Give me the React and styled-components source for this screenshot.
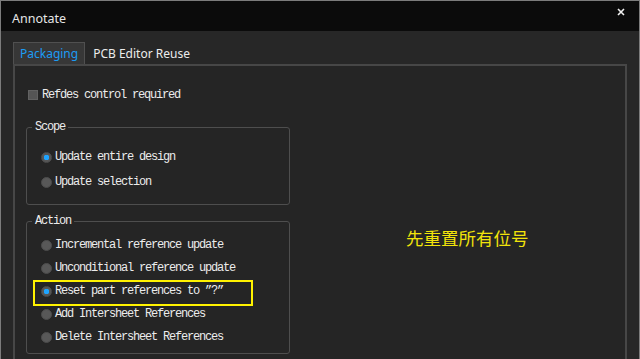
import React from 'react'
import styled, { createGlobalStyle } from 'styled-components'

const GlobalStyle = createGlobalStyle`
  html, body {
    margin: 0;
    padding: 0;
    background: #262626;
  }
  * { box-sizing: border-box; }
`

const scopeItems = [
  { label: 'Update entire design', checked: true },
  { label: 'Update selection' },
]

const actionItems = [
  { label: 'Incremental reference update' },
  { label: 'Unconditional reference update' },
  { label: 'Reset part references to \u201d?\u201d', checked: true, marked: true },
  { label: 'Add Intersheet References' },
  { label: 'Delete Intersheet References' },
]

function App() {
  return (
    <>
      <GlobalStyle />
      <Window>
        <TitleBar>
          <Title>Annotate</Title>
          <CloseButton>
            <svg width="8" height="8" viewBox="0 0 8 8">
              <path d="M1 1 L7 7 M7 1 L1 7" stroke="#f2f2f2" strokeWidth="1.6" />
            </svg>
          </CloseButton>
        </TitleBar>
        <Body>
          <Tabs>
            <Tab active>Packaging</Tab>
            <Tab>PCB Editor Reuse</Tab>
          </Tabs>
          <Panel>
            <CheckRow>
              <CheckBox />
              <Label>Refdes control required</Label>
            </CheckRow>

            <ScopeGroup top={14} bottom={12} gap={5}>
              <Legend>Scope</Legend>
              {scopeItems.map((item) => (
                <RadioRow key={item.label}>
                  <Radio checked={item.checked} />
                  <Label>{item.label}</Label>
                </RadioRow>
              ))}
            </ScopeGroup>

            <ActionLine>
              <Group top={8} bottom={6} gap={3}>
                <Legend>Action</Legend>
                {actionItems.map((item) => (
                  <RadioRow key={item.label} marked={item.marked}>
                    <Radio checked={item.checked} />
                    <Label>{item.label}</Label>
                  </RadioRow>
                ))}
              </Group>
              <Note>先重置所有位号</Note>
            </ActionLine>
          </Panel>
        </Body>
      </Window>
    </>
  )
}

export default App

const Window = styled.div`
  width: 640px;
  height: 359px;
  border: 1px solid #7c7c7c;
  border-bottom: none;
  background: #272727;
  display: flex;
  flex-direction: column;
  overflow: hidden;
`

const TitleBar = styled.div`
  height: 30px;
  flex: none;
  background: #0b0b0b;
  display: flex;
  justify-content: space-between;
  align-items: flex-start;
  padding: 0 14px 0 11px;
`

const Title = styled.div`
  font-family: "Noto Sans", "Liberation Sans", sans-serif;
  font-size: 12.5px;
  color: #e6e6e6;
  line-height: 30px;
  padding-top: 3px;
`

const CloseButton = styled.div`
  display: flex;
  padding-top: 7px;
`

const Body = styled.div`
  flex: 1;
  display: flex;
  flex-direction: column;
  padding: 11px 12px 0 12px;
`

const Tabs = styled.div`
  display: flex;
  height: 22px;
  align-items: stretch;
`

const Tab = styled.div`
  font-family: "Noto Sans", "Liberation Sans", sans-serif;
  font-size: 12px;
  display: flex;
  align-items: center;
  min-width: 72px;
  color: ${(p) => (p.active ? '#1c9cf4' : '#ececec')};
  background: ${(p) => (p.active ? '#373737' : 'transparent')};
  border: 1px solid ${(p) => (p.active ? '#505050' : 'transparent')};
  border-bottom: none;
  padding: 0 6px 0 ${(p) => (p.active ? '6px' : '7px')};
`

const Panel = styled.div`
  flex: 1;
  min-height: 320px;
  background: #252525;
  border: 2px solid #474747;
  border-bottom: none;
  padding: 23px 12px 0 12px;
  display: flex;
  flex-direction: column;
  align-items: flex-start;
`

const Label = styled.span`
  font-family: "Liberation Mono", "DejaVu Sans Mono", monospace;
  font-size: 12px;
  letter-spacing: -1.2px;
  color: #ececec;
  line-height: 12px;
  white-space: pre;
`

const CheckRow = styled.div`
  display: flex;
  align-items: center;
  gap: 4px;
  height: 12px;
  margin-left: 1px;
`

const CheckBox = styled.span`
  width: 10px;
  height: 10px;
  background: #555555;
  border: 1px solid #626262;
`

const Group = styled.fieldset`
  width: 264px;
  margin: 0 0 0 -1px;
  border: 1px solid #4e4e4e;
  border-radius: 3px;
  padding: ${(p) => `${p.top}px 12px ${p.bottom}px 14px`};
  display: flex;
  flex-direction: column;
  gap: ${(p) => p.gap}px;
`

const ScopeGroup = styled(Group)`
  margin-top: 20px;
`

const Legend = styled.legend`
  font-family: "Liberation Mono", "DejaVu Sans Mono", monospace;
  font-size: 12px;
  letter-spacing: -1.2px;
  line-height: 12px;
  color: #ececec;
  padding: 0 3px;
  margin-left: -9px;
`

const RadioRow = styled.div`
  position: relative;
  display: flex;
  align-items: center;
  gap: 3px;
  height: 20px;
  ${(p) =>
    p.marked &&
    `
    &::after {
      content: '';
      position: absolute;
      left: -8px;
      top: -1px;
      width: 216px;
      height: 22px;
      border: 2px solid #fff200;
    }
  `}
`

const Radio = styled.span`
  width: 11px;
  height: 11px;
  border-radius: 50%;
  background: ${(p) =>
    p.checked
      ? 'radial-gradient(circle, #1ea4ff 0 2.6px, #565656 3px)'
      : '#585858'};
  border: 1px solid #4c4c4c;
  flex: none;
`

const ActionLine = styled.div`
  display: flex;
  align-items: flex-start;
  margin-top: 10px;
`

const Note = styled.div`
  font-family: "Noto Sans CJK SC", sans-serif;
  font-size: 17.5px;
  line-height: 18px;
  color: #f2e40a;
  margin-left: 116px;
  margin-top: 14px;
`
